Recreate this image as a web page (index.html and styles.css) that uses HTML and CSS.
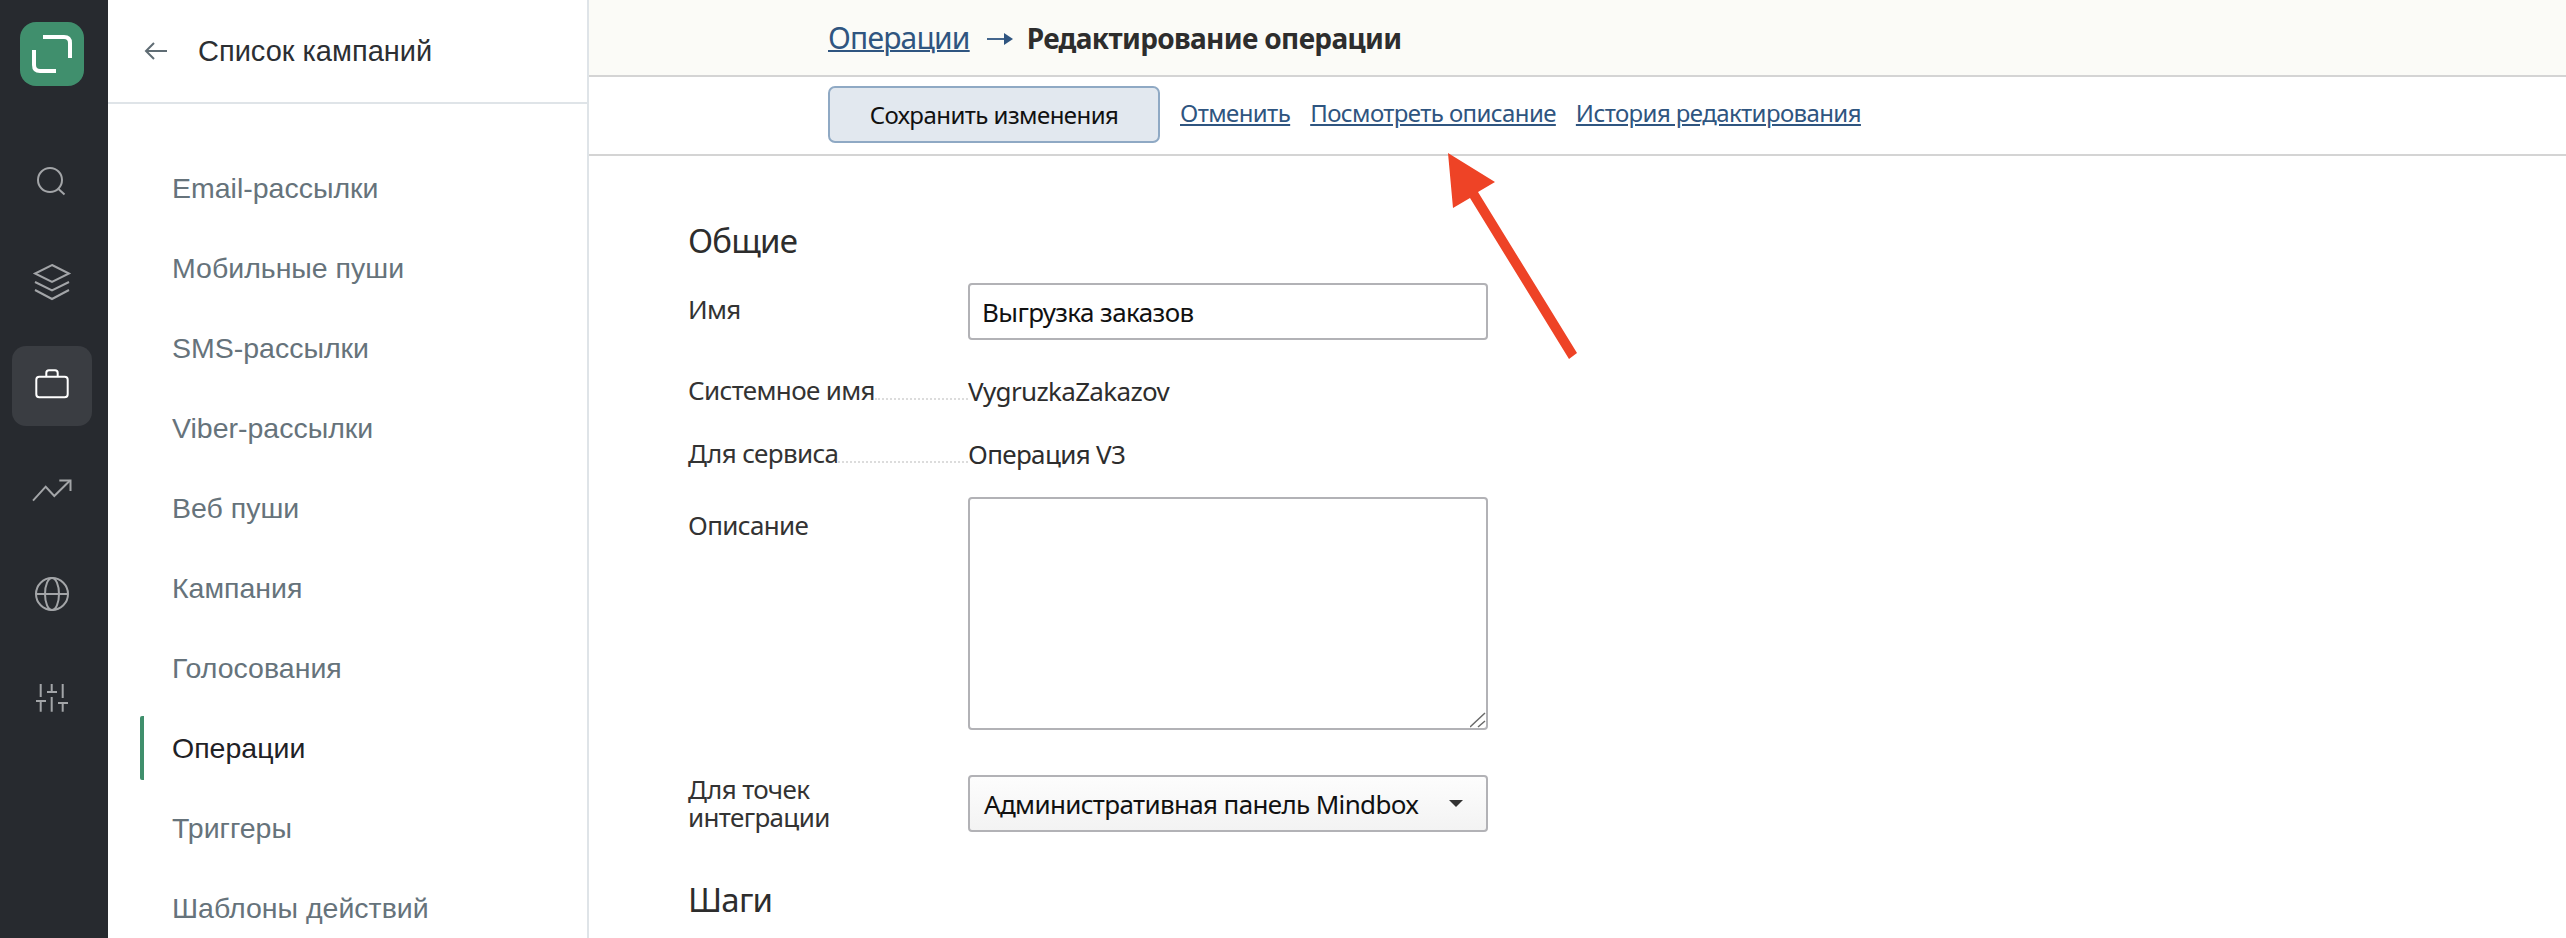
FILE: index.html
```html
<!DOCTYPE html>
<html lang="ru">
<head>
  <meta charset="UTF-8">
  <meta name="viewport" content="width=device-width, initial-scale=1.0">
  <title>Редактирование операции</title>
  <link rel="stylesheet" href="styles.css">
</head>
<body>
  <div class="app">
    <aside class="rail">
      <div class="logo">
        <svg width="64" height="64" viewBox="0 0 64 64" fill="none" stroke="#fff" stroke-width="4">
          <path d="M23 15 H44 Q50 15 50 21 V36"/>
          <path d="M14 28 V43 Q14 49 20 49 H36"/>
        </svg>
      </div>
      <div class="rail-items">
        <a class="rail-item">
          <svg width="40" height="40" viewBox="0 0 40 40" fill="none" stroke="#a3a5a8" stroke-width="2">
            <circle cx="18" cy="22" r="12"/>
            <path d="M26.500 31 L32.500 36.500"/>
          </svg>
        </a>
        <a class="rail-item">
          <svg width="40" height="40" viewBox="0 0 40 40" fill="none" stroke="#a3a5a8" stroke-width="2">
            <path d="M20 3 L37 11.500 L20 20 L3 11.500 Z"/>
            <path d="M3 20 L20 28.500 L37 20"/>
            <path d="M3 28 L20 37 L37 28"/>
          </svg>
        </a>
        <a class="rail-item active">
          <svg width="40" height="40" viewBox="0 0 40 40" fill="none" stroke="#fff" stroke-width="2">
            <rect x="4.300" y="10.700" width="31.400" height="20.600" rx="3"/>
            <path d="M14.300 10.700 V7 Q14.300 4.300 17 4.300 H23 Q25.700 4.300 25.700 7 V10.700"/>
          </svg>
        </a>
        <a class="rail-item">
          <svg width="40" height="40" viewBox="0 0 40 40" fill="none" stroke="#a3a5a8" stroke-width="2">
            <path d="M1 30.700 L13.700 16.700 L22.300 26 L38 10.500"/>
            <path d="M27.300 10.500 H38.500 V21"/>
          </svg>
        </a>
        <a class="rail-item">
          <svg width="40" height="40" viewBox="0 0 40 40" fill="none" stroke="#a3a5a8" stroke-width="2">
            <circle cx="20" cy="20" r="16"/>
            <ellipse cx="20" cy="20" rx="7" ry="16"/>
            <path d="M4 20 H36"/>
          </svg>
        </a>
        <a class="rail-item">
          <svg width="40" height="40" viewBox="0 0 40 40" fill="none" stroke="#a3a5a8" stroke-width="2">
            <path d="M8.700 6 V19 M4 23 H14 M8.700 23 V33.700"/>
            <path d="M19.700 6 V14 M15 14 H25 M19.700 19 V33.700"/>
            <path d="M30.700 6 V20 M26 25 H36 M30.700 25 V33.700"/>
          </svg>
        </a>
      </div>
    </aside>

    <nav class="sidebar">
      <div class="sidebar-head">
        <svg width="24" height="20" viewBox="0 0 24 20" fill="none" stroke="#5f6c74" stroke-width="2">
          <path d="M23 10 H2 M10 2 L2 10 L10 18"/>
        </svg>
        <span>Список кампаний</span>
      </div>
      <ul class="menu">
        <li>Email-рассылки</li>
        <li>Мобильные пуши</li>
        <li>SMS-рассылки</li>
        <li>Viber-рассылки</li>
        <li>Веб пуши</li>
        <li>Кампания</li>
        <li>Голосования</li>
        <li class="current">Операции</li>
        <li>Триггеры</li>
        <li>Шаблоны действий</li>
      </ul>
    </nav>

    <main class="main">
      <header class="topbar">
        <a class="crumb" href="#">Операции</a>
        <svg class="crumb-arrow" width="26" height="14" viewBox="0 0 26 14" fill="#2f5580">
          <path d="M0 6.100 H19 V7.900 H0 Z"/>
          <path d="M17 1 L26 7 L17 13 Z"/>
        </svg>
        <h1>Редактирование операции</h1>
      </header>
      <div class="toolbar">
        <button class="save">Сохранить изменения</button>
        <a href="#">Отменить</a>
        <a href="#">Посмотреть описание</a>
        <a href="#">История редактирования</a>
      </div>

      <form class="form">
        <h2>Общие</h2>
        <div class="row row-name">
          <label>Имя</label>
          <input type="text" value="Выгрузка заказов">
        </div>
        <div class="row row-static">
          <label class="dotted"><span>Системное имя</span><i></i></label>
          <span class="value">VygruzkaZakazov</span>
        </div>
        <div class="row row-static">
          <label class="dotted"><span>Для сервиса</span><i></i></label>
          <span class="value">Операция V3</span>
        </div>
        <div class="row row-desc">
          <label>Описание</label>
          <div class="area">
            <textarea></textarea>
            <svg class="grip" width="16" height="16" viewBox="0 0 16 16" fill="none" stroke="#6a6a6a" stroke-width="1.500">
              <path d="M0 15 L15 1 M8 15 L15 9"/>
            </svg>
          </div>
        </div>
        <div class="row row-points">
          <label>Для точек<br>интеграции</label>
          <div class="select">
            <span>Административная панель Mindbox</span>
            <b></b>
          </div>
        </div>
        <h2 class="steps">Шаги</h2>
      </form>
    </main>
  </div>

  <svg class="pointer" width="140" height="220" viewBox="0 0 140 220">
    <path d="M2 2 L49 31 L32 41 L131 202 L123 208 L24 47 L7 57 Z" fill="#ee4326"/>
  </svg>
</body>
</html>
```

FILE: styles.css
```css
* {
  box-sizing: border-box;
}
html, body {
  margin: 0;
  height: 100%;
  overflow: hidden;
}
body {
  font-family: "Noto Sans", sans-serif;
  font-size: 26px;
  letter-spacing: -0.65px;
  color: #222;
  background: #fff;
}
.app {
  display: flex;
  height: 938px;
}

/* left rail */
.rail {
  width: 108px;
  flex: none;
  background: #272a2f;
  display: flex;
  flex-direction: column;
  align-items: center;
  padding: 22px 4px 0 0;
}
.logo {
  width: 64px;
  height: 64px;
  border-radius: 16px;
  background: #408f6d;
}
.logo svg {
  display: block;
}
.rail-items {
  margin-top: 52px;
  display: flex;
  flex-direction: column;
  gap: 24px;
}
.rail-item {
  width: 80px;
  height: 80px;
  border-radius: 14px;
  display: flex;
  align-items: center;
  justify-content: center;
}
.rail-item.active {
  background: #3a3d42;
}

/* campaigns list */
.sidebar {
  width: 481px;
  flex: none;
  border-right: 2px solid #dfe4e8;
  font-family: "Liberation Sans", sans-serif;
  letter-spacing: 0;
}
.sidebar-head {
  height: 104px;
  border-bottom: 2px solid #dfe4e8;
  padding-left: 36px;
  display: flex;
  align-items: center;
  gap: 30px;
  font-size: 29px;
  color: #2c2f33;
}
.menu {
  list-style: none;
  margin: 0;
  padding: 52px 0 0 32px;
  font-size: 28.5px;
  color: #66737b;
}
.menu li {
  height: 64px;
  margin-bottom: 16px;
  line-height: 64px;
  padding-left: 28px;
  border-left: 4px solid transparent;
}
.menu li.current {
  color: #1f2226;
  border-left-color: #3f8f6c;
  border-radius: 2px;
}

/* main column */
.main {
  flex: 1;
  min-width: 0;
}
.topbar {
  height: 77px;
  background: #fbfbf7;
  border-bottom: 2px solid #d4d4d4;
  padding-left: 239px;
  display: flex;
  align-items: center;
}
.crumb {
  font-size: 30px;
  letter-spacing: -0.8px;
  color: #2f5580;
  text-decoration-thickness: 2px;
}
.crumb-arrow {
  margin: 3px 14px 0 17px;
}
h1 {
  margin: 0;
  font-size: 28px;
  font-weight: 700;
  color: #2d2d2d;
}
.toolbar {
  height: 79px;
  border-bottom: 2px solid #d4d4d4;
  padding: 0 0 3px 239px;
  display: flex;
  align-items: center;
  gap: 20px;
  font-size: 24px;
  letter-spacing: -0.6px;
}
.toolbar a {
  margin-bottom: 3px;
  color: #2f5580;
}
.save {
  width: 332px;
  height: 57px;
  border: 2px solid #8fa9c4;
  border-radius: 7px;
  background: #e2e8ef;
  font-family: inherit;
  font-size: 24px;
  letter-spacing: -0.55px;
  color: #111;
}

/* form */
.form {
  padding: 62px 0 0 99px;
}
h2 {
  margin: 0;
  height: 46px;
  line-height: 46px;
  font-size: 33px;
  letter-spacing: -0.8px;
  font-weight: 400;
  color: #2d2d2d;
}
.row {
  display: flex;
}
.row label {
  width: 280px;
  flex: none;
  line-height: 29px;
  color: #333;
}
.row-name {
  margin-top: 19px;
  align-items: flex-start;
}
.row-name label {
  padding-top: 12px;
}
input, textarea {
  width: 520px;
  border: 2px solid #b2b2b6;
  border-radius: 4px;
  font-family: inherit;
  font-size: 26px;
  letter-spacing: -0.6px;
  color: #111;
  background: #fff;
}
input {
  height: 57px;
  padding: 0 12px;
}
.area {
  position: relative;
  width: 520px;
}
textarea {
  height: 233px;
  display: block;
  resize: none;
}
.grip {
  position: absolute;
  right: 2px;
  bottom: 2px;
}
.row-static {
  height: 30px;
  line-height: 30px;
  margin-top: 36px;
}
.row-static + .row-static {
  margin-top: 33px;
}
.dotted {
  display: flex;
}
.dotted i {
  flex: 1;
  height: 24px;
  border-bottom: 2px dotted #dcdcdc;
}
.value {
  color: #2d2d2d;
}
.row-desc {
  margin-top: 28px;
}
.row-desc label {
  padding-top: 14px;
}
.row-points {
  margin-top: 45px;
}
.row-points label {
  line-height: 28px;
}
.select {
  width: 520px;
  height: 57px;
  border: 2px solid #b2b2b6;
  border-radius: 4px;
  background: linear-gradient(#fdfdfd, #f3f3f3);
  padding: 0 14px;
  display: flex;
  align-items: center;
  justify-content: space-between;
  color: #111;
}
.select b {
  width: 0;
  height: 0;
  margin-right: 9px;
  border-left: 7px solid transparent;
  border-right: 7px solid transparent;
  border-top: 7px solid #333;
}
.steps {
  margin-top: 45px;
}

/* annotation arrow over the page */
.pointer {
  position: absolute;
  left: 1446px;
  top: 151px;
}
```
